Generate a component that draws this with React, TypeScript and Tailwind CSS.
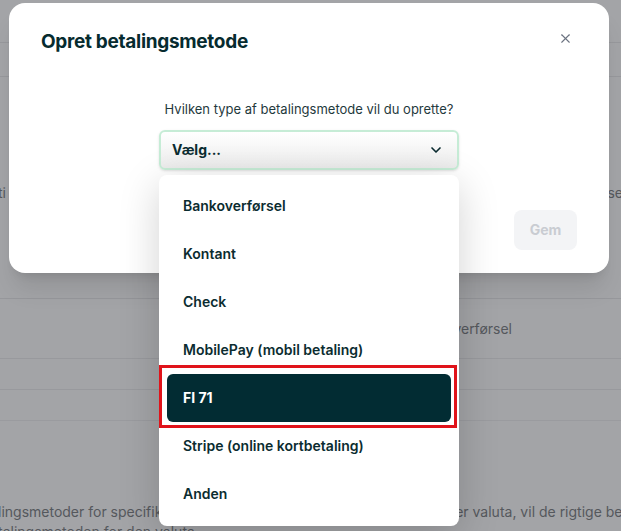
import { ChevronDown, X } from "lucide-react";

const options = [
  "Bankoverførsel",
  "Kontant",
  "Check",
  "MobilePay (mobil betaling)",
  "FI 71",
  "Stripe (online kortbetaling)",
  "Anden",
];

const App = () => {
  const selected = "FI 71";

  return (
    <div
      className="relative h-[531px] w-[621px] overflow-hidden bg-[#a3a4a7] text-[#0b2c30]"
      style={{ fontFamily: "Inter, 'Liberation Sans', sans-serif" }}
    >
      {/* page behind the overlay */}
      <div className="flex flex-col text-sm text-[#55585d]">
        <div className="h-[43px] border-b border-[#97989c]" />
        <div className="h-[34px] border-b border-[#97989c]" />
        <div className="flex h-[222px] items-center justify-between border-b border-[#96979b] pb-[10px] pt-[20px]">
          <span className="-ml-[2px]">ti</span>
          <span className="-mr-[2px]">se</span>
        </div>
        <div className="flex h-[60px] items-center justify-end border-b border-[#98999d] pr-[109px]">
          <span>verførsel</span>
        </div>
        <div className="h-[31px] border-b border-[#98999d]" />
        <div className="h-[31px] border-b border-[#9a9b9f]" />
        <div className="flex flex-col gap-[6px] pt-[84px] leading-[14px]">
          <div className="flex justify-between whitespace-nowrap">
            <span className="-ml-[2px]">lingsmetoder for specifikke</span>
            <span className="-mr-[14px]">er valuta, vil de rigtige beta</span>
          </div>
          <span className="-ml-[2px]">talingsmetoden for den valuta</span>
        </div>
      </div>

      {/* modal */}
      <div className="absolute left-[9px] top-[3px] flex h-[270px] w-[600px] flex-col rounded-2xl bg-white px-8 pt-[25px] shadow-xl">
        <div className="flex items-center justify-between">
          <h2 className="text-[19px] font-bold leading-[28px] tracking-[-0.3px] text-[#062b2f]">
            Opret betalingsmetode
          </h2>
          <X className="-mt-[7px] mr-[4px] h-[15px] w-[15px] text-[#6b7280]" strokeWidth={1.8} />
        </div>
        <p className="mt-[44px] text-center text-[13px] text-[#1f3a3d]">
          Hvilken type af betalingsmetode vil du oprette?
        </p>
        <div className="mx-auto mt-[10px] flex h-10 w-[300px] items-center justify-between rounded-md border-2 border-[#c6ecd6] bg-gradient-to-b from-white to-[#ececec] pl-[11px] pr-[13px] shadow-sm">
          <span className="text-sm font-bold text-[#0b2c30]">Vælg...</span>
          <ChevronDown className="h-4 w-4 text-[#0b2c30]" strokeWidth={2.5} />
        </div>
        <div className="mt-auto mb-[23px] flex justify-end">
          <button className="h-10 w-[63px] rounded-lg bg-[#f3f4f6] text-sm font-bold text-[#c9ccd2]">
            Gem
          </button>
        </div>
      </div>

      {/* dropdown list */}
      <div className="absolute left-[159px] top-[175px] flex w-[300px] flex-col rounded-lg bg-white pb-[8px] pt-[7px] shadow-[0_10px_40px_rgba(0,0,0,0.18)]">
        {options.map((o) =>
          o === selected ? (
            <div key={o} className="relative mx-2">
              <span className="absolute -bottom-[6px] -left-2 -right-[6px] -top-[9px] border-[3px] border-[#e0131a]" />
              <div className="flex h-12 items-center rounded-md bg-[#022c33] px-4 text-sm font-bold text-white">
                {o}
              </div>
            </div>
          ) : (
            <div key={o} className="flex h-12 items-center px-6 text-sm font-semibold text-[#0b2c30]">
              {o}
            </div>
          )
        )}
      </div>
    </div>
  );
};

export default App;
